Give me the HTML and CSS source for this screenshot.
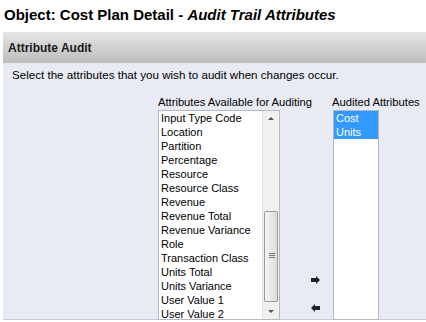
FILE: index.html
```html
<!DOCTYPE html>
<html lang="en">
<head>
  <meta charset="UTF-8" />
  <title>Object: Cost Plan Detail - Audit Trail Attributes</title>
  <link rel="stylesheet" href="styles.css">
</head>
<body>
  <h1 class="page-title">Object: Cost Plan Detail - <em>Audit Trail Attributes</em></h1>

  <div class="section">
    <div class="section-head">Attribute Audit</div>
    <div class="section-body">
      <p class="hint">Select the attributes that you wish to audit when changes occur.</p>

      <div class="picker">
        <div class="pick-col col-available">
          <div class="pick-label">Attributes Available for Auditing</div>
          <div class="listbox">
            <ul class="items">
              <li>Input Type Code</li>
              <li>Location</li>
              <li>Partition</li>
              <li>Percentage</li>
              <li>Resource</li>
              <li>Resource Class</li>
              <li>Revenue</li>
              <li>Revenue Total</li>
              <li>Revenue Variance</li>
              <li>Role</li>
              <li>Transaction Class</li>
              <li>Units Total</li>
              <li>Units Variance</li>
              <li>User Value 1</li>
              <li>User Value 2</li>
            </ul>
            <!-- fake scrollbar -->
            <div class="scrollbar">
              <span class="sb-up"></span>
              <div class="sb-thumb"><span class="grip"></span></div>
              <span class="sb-down"></span>
            </div>
          </div>
        </div>

        <div class="move-btns">
          <span class="arrow right"></span>
          <span class="arrow left"></span>
        </div>

        <div class="pick-col col-audited">
          <div class="pick-label">Audited Attributes</div>
          <div class="listbox">
            <ul class="items">
              <li class="selected">Cost</li>
              <li class="selected">Units</li>
            </ul>
          </div>
        </div>
      </div>
    </div>
  </div>
</body>
</html>
```

FILE: styles.css
```css
* { box-sizing: border-box; }
body {
  margin: 0;
  font-family: Arial, 'Liberation Sans', sans-serif;
  color: #000;
  background: #fff;
  overflow: hidden;
}
.page-title {
  font-size: 15px;
  font-weight: bold;
  margin: 0;
  padding: 6px 4px 0;
  height: 32px;
}
.page-title em {
  font-style: italic;
}
.section {
  margin-left: 3px;
}
.section-head {
  height: 31px;
  line-height: 31px;
  padding-left: 5px;
  font-size: 12px;
  font-weight: bold;
  color: #1a1a1a;
  background: linear-gradient(#e4e4e4, #bdbdbd);
  border-top: 1px solid #e0e0e0;
}
.section-body {
  background: #e8ebf4;
  padding: 5px 0 0 9px;
  height: 257px;
  border-bottom: 1px solid #c9ccd4;
}
.hint {
  margin: 0 0 14px;
  font-size: 11.6px;
}
.picker {
  display: flex;
  margin-left: 146px;
}
.pick-label {
  font-size: 11.2px;
  white-space: nowrap;
  height: 14px;
  line-height: 14px;
  margin-bottom: 1px;
}
.listbox {
  position: relative;
  background: #fff;
  border: 1px solid #b5b9c4;
  height: 210px;
  overflow: hidden;
}
.col-available { width: 122px; }
.col-audited .listbox { width: 46px; margin-left: 1px; }
.items {
  list-style: none;
  margin: 0;
  padding: 0;
  font-size: 11px;
}
.items li {
  height: 14px;
  line-height: 14px;
  padding-left: 2px;
  white-space: nowrap;
}
.items li.selected {
  background: #3399ff;
  color: #fff;
}
.scrollbar {
  position: absolute;
  top: 0;
  right: 0;
  bottom: 0;
  width: 17px;
  background: #f0f0f0;
  border-left: 1px solid #e2e2e2;
}
.sb-up, .sb-down {
  position: absolute;
  left: 5px;
  width: 0;
  height: 0;
  border-left: 3px solid transparent;
  border-right: 3px solid transparent;
}
.sb-up {
  top: 6px;
  border-bottom: 3px solid #555;
}
.sb-down {
  bottom: 6px;
  border-top: 3px solid #555;
}
.sb-thumb {
  position: absolute;
  left: 1px;
  right: 1px;
  top: 100px;
  height: 91px;
  border: 1px solid #9a9a9a;
  border-radius: 2px;
  background: linear-gradient(90deg, #f4f4f4, #dcdcdc);
}
.grip {
  position: absolute;
  left: 4px;
  top: 41px;
  width: 6px;
  height: 5px;
  border-top: 1px solid #777;
  border-bottom: 1px solid #777;
}
.grip::after {
  content: "";
  position: absolute;
  left: 0;
  right: 0;
  top: 1px;
  border-top: 1px solid #777;
}
.move-btns {
  width: 52px;
  display: flex;
  flex-direction: column;
  align-items: flex-end;
  justify-content: flex-end;
  gap: 20px;
  padding: 0 12px 8px 0;
}
.arrow {
  position: relative;
  display: block;
  width: 9px;
  height: 8px;
}
.arrow::before {
  content: "";
  position: absolute;
  top: 2px;
  width: 5px;
  height: 4px;
  background: #222;
}
.arrow::after {
  content: "";
  position: absolute;
  top: 0;
  border-top: 4px solid transparent;
  border-bottom: 4px solid transparent;
}
.arrow.right::before { left: 0; }
.arrow.right::after { left: 5px; border-left: 4px solid #222; }
.arrow.left::before { right: 0; }
.arrow.left::after { right: 5px; border-right: 4px solid #222; }
```
